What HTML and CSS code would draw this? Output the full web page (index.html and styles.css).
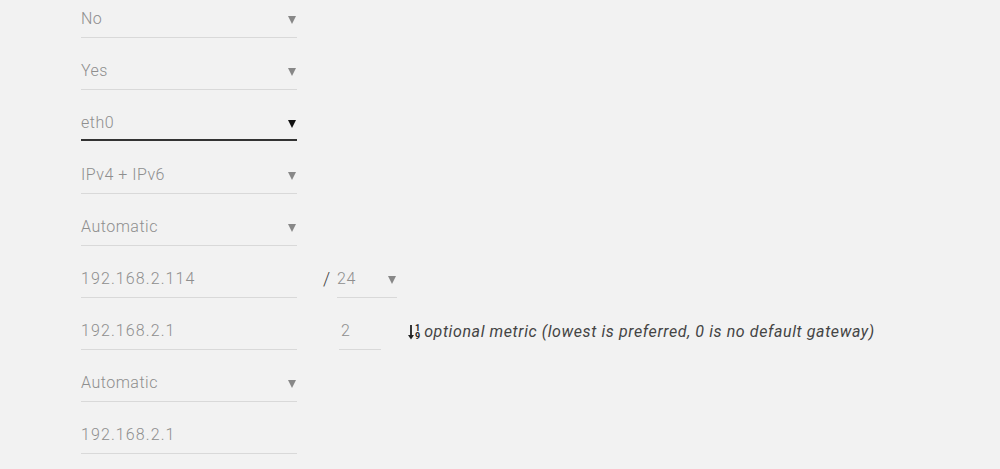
FILE: index.html
```html
<!DOCTYPE html>
<html lang="en">
<head>
    <meta charset="UTF-8">
    <meta name="viewport" content="width=device-width, initial-scale=1.0">
    <title>Network interface</title>
    <link rel="stylesheet" href="styles.css">
</head>
<body>

<div class="form">
    <!-- dhcp / enabled toggles -->
    <div class="row">
        <div class="field select">No <span class="caret"></span></div>
    </div>
    <div class="row">
        <div class="field select">Yes <span class="caret"></span></div>
    </div>

    <!-- interface (focused) -->
    <div class="row">
        <div class="field select focused">eth0 <span class="caret"></span></div>
    </div>

    <div class="row">
        <div class="field select">IPv4 + IPv6 <span class="caret"></span></div>
    </div>
    <div class="row">
        <div class="field select">Automatic <span class="caret"></span></div>
    </div>

    <!-- address / prefix -->
    <div class="row">
        <div class="field ip">192.168.2.114</div>
        <span class="slash">/</span>
        <div class="field select prefix">24 <span class="caret"></span></div>
    </div>

    <!-- gateway / metric -->
    <div class="row">
        <div class="field ip">192.168.2.1</div>
        <div class="field metric">2</div>
        <div class="hint">
            <span class="sort-icon">
                <svg width="6" height="16" viewBox="0 0 6 16">
                    <path d="M3 1v11" stroke="#222" stroke-width="1.8"/>
                    <path d="M0 11h6l-3 4.5z" fill="#222"/>
                </svg>
                <span class="digits"><span>1</span><span>9</span></span>
            </span>
            optional metric (lowest is preferred, 0 is no default gateway)
        </div>
    </div>

    <div class="row">
        <div class="field select">Automatic <span class="caret"></span></div>
    </div>
    <div class="row">
        <div class="field ip">192.168.2.1</div>
    </div>
</div>

</body>
</html>
```

FILE: styles.css
```css
body {
    margin: 0;
    background-color: #f2f2f2;
    font-family: Roboto, "Liberation Sans", sans-serif;
    font-size: 16px;
    font-weight: 300;
    color: #8e8e8e;
}
.form {
    padding-top: 1px;
    padding-left: 81px;
}
.row {
    display: flex;
    align-items: flex-start;
    height: 52px;
}
.field {
    box-sizing: border-box;
    width: 216px;
    height: 37px;
    padding-top: 8px;
    border-bottom: 1px solid #d9d9d9;
    position: relative;
    letter-spacing: 0.5px;
}
.field.ip {
    letter-spacing: 1.1px;
}
.field.focused {
    border-bottom: 2px solid #333;
    height: 36px;
}
.caret {
    position: absolute;
    right: 1px;
    top: 15px;
    width: 0;
    height: 0;
    border-left: 4px solid transparent;
    border-right: 4px solid transparent;
    border-top: 8px solid #888;
}
.focused .caret {
    border-top-color: #111;
}
.slash {
    margin-left: 26px;
    width: 14px;
    padding-top: 7px;
    color: #444;
    font-size: 18px;
}
.prefix {
    width: 60px;
}
.metric {
    width: 42px;
    margin-left: 42px;
    padding-left: 2px;
}
.hint {
    display: flex;
    align-items: center;
    margin-left: 27px;
    padding-top: 9px;
    font-style: italic;
    font-weight: 400;
    letter-spacing: 0.6px;
    color: #444;
}
.sort-icon {
    display: inline-flex;
    align-items: center;
    margin-right: 4px;
}
.digits {
    display: flex;
    flex-direction: column;
    font-style: normal;
    font-weight: bold;
    font-size: 9px;
    line-height: 8px;
    letter-spacing: 0;
    color: #222;
    margin-left: 1px;
}
```
